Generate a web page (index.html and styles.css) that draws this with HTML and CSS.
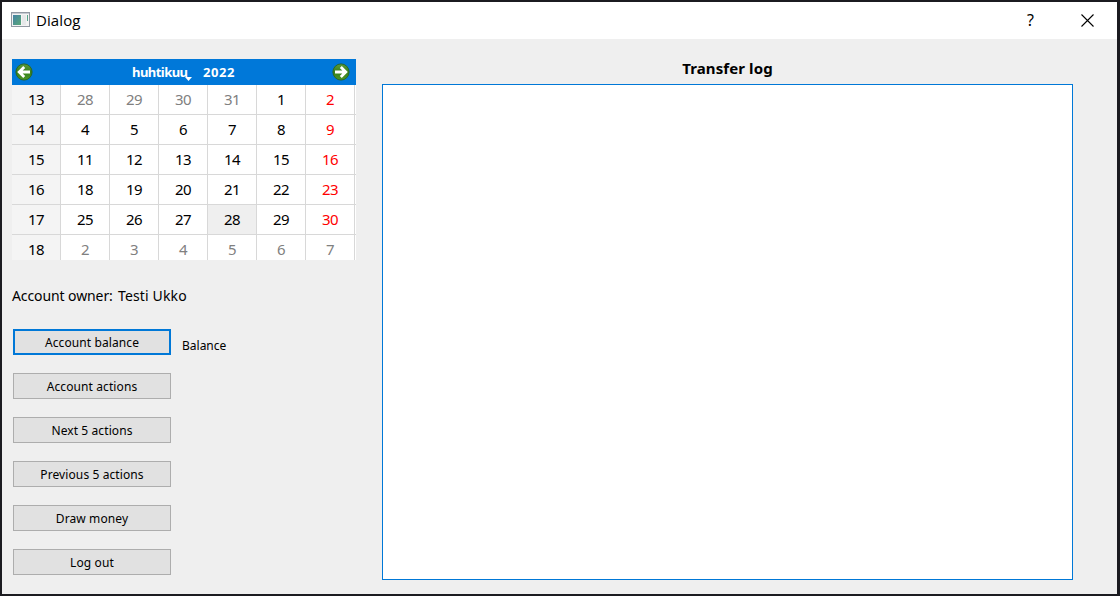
FILE: index.html
```
<!DOCTYPE html>
<html lang="en">
<head>
<meta charset="utf-8">
<title>Dialog</title>
<link rel="stylesheet" href="styles.css">
</head>
<body>
<div class="window">
  <header class="titlebar">
    <svg class="app-icon" width="19" height="16" viewBox="0 0 19 16">
      <defs><linearGradient id="pane" x1="0" y1="0" x2="1" y2="1"><stop offset="0" stop-color="#4482a5"/><stop offset="1" stop-color="#5aa878"/></linearGradient></defs>
      <rect x=".5" y=".5" width="18" height="14" fill="#f3f3f3" stroke="#9299a3"/>
      <path d="M1 1.5h17" stroke="#c6cad2"/>
      <rect x="2" y="3" width="8" height="10" fill="url(#pane)"/>
      <rect x="11" y="3" width="4" height="10" fill="#e6e8e9"/>
      <rect x="16" y="3" width="1" height="6" fill="#58a58b"/>
    </svg>
    <span class="title">Dialog</span>
    <span class="help">?</span>
    <svg class="close" width="13" height="13" viewBox="0 0 13 13"><path d="M.5.5l12 12M12.5.5l-12 12" fill="none" stroke="#000" stroke-width="1.1"/></svg>
  </header>
  <main class="content">
    <section class="left">
      <div class="calendar">
        <div class="nav">
          <svg class="prev" width="18" height="18" viewBox="0 0 18 18">
            <defs><linearGradient id="ball" x1="0" y1="0" x2="0" y2="1"><stop offset="0" stop-color="#5d9b3c"/><stop offset=".5" stop-color="#38801b"/><stop offset="1" stop-color="#4c9526"/></linearGradient></defs>
            <circle cx="9" cy="9" r="8.1" fill="url(#ball)" stroke="#2a6420" stroke-width=".9"/>
            <path d="M15 9H5M9.2 4L4.2 9l5 5" fill="none" stroke="#fff" stroke-width="2.8"/>
          </svg>
          <span class="month">huhtikuu<svg class="drop" width="7" height="4" viewBox="0 0 7 4"><path d="M0 0h7L3.5 4z" fill="#fff"/></svg></span>
          <span class="year">2022</span>
          <svg class="next" width="18" height="18" viewBox="0 0 18 18">
            <circle cx="9" cy="9" r="8.1" fill="url(#ball)" stroke="#2a6420" stroke-width=".9"/>
            <path d="M3 9h10M8.8 4l5 5-5 5" fill="none" stroke="#fff" stroke-width="2.8"/>
          </svg>
        </div>
        <div class="grid">
          <span class="week">13</span><span class="off">28</span><span class="off">29</span><span class="off">30</span><span class="off">31</span><span>1</span><span class="red">2</span><i></i>
          <span class="week">14</span><span>4</span><span>5</span><span>6</span><span>7</span><span>8</span><span class="red">9</span><i></i>
          <span class="week">15</span><span>11</span><span>12</span><span>13</span><span>14</span><span>15</span><span class="red">16</span><i></i>
          <span class="week">16</span><span>18</span><span>19</span><span>20</span><span>21</span><span>22</span><span class="red">23</span><i></i>
          <span class="week">17</span><span>25</span><span>26</span><span>27</span><span class="selected">28</span><span>29</span><span class="red">30</span><i></i>
          <span class="week">18</span><span class="off">2</span><span class="off">3</span><span class="off">4</span><span class="off">5</span><span class="off">6</span><span class="off">7</span><i></i>
        </div>
      </div>
      <div class="owner"><span class="owner-label">Account owner:</span><span class="owner-name">Testi Ukko</span></div>
      <div class="actions">
        <div class="action-row"><button class="btn focused">Account balance</button><span class="balance">Balance</span></div>
        <button class="btn">Account actions</button>
        <button class="btn">Next 5 actions</button>
        <button class="btn">Previous 5 actions</button>
        <button class="btn">Draw money</button>
        <button class="btn">Log out</button>
      </div>
    </section>
    <section class="log">
      <h1 class="log-title">Transfer log</h1>
      <div class="log-view"></div>
    </section>
  </main>
</div>
</body>
</html>
```
FILE: styles.css
```
* { box-sizing: border-box; }
body { margin: 0; font-family: "Noto Sans", sans-serif; color: #000; }
.window {
  width: 1120px; height: 596px;
  border: 2px solid #1b1b20; border-right-width: 3px;
  background: #efefef;
  display: flex; flex-direction: column; overflow: hidden;
}
.titlebar { height: 37px; flex: none; background: #fff; display: flex; align-items: center; padding: 0 23px 0 9px; }
.app-icon { margin-top: -1px; }
.title { margin: -2px 0 0 6px; font-family: "Open Sans", sans-serif; font-size: 15px; letter-spacing: .1px; flex: 1; }
.help { font-size: 16px; margin: -2px 47px 0 0; }
.close { display: block; }
.content { flex: 1; display: flex; padding: 20px 0 0 10px; }
.left { width: 344px; margin-right: 26px; }
.calendar { height: 201px; overflow: hidden; background: #fff; }
.nav { height: 26px; background: #0078d9; color: #fff; display: flex; align-items: center; padding: 0 6px 0 3px; font-weight: 700; font-size: 13px; }
.month { position: relative; margin-left: 99px; width: 71px; letter-spacing: -.55px; }
.drop { position: absolute; left: 53px; top: 14px; }
.year { flex: 1; letter-spacing: .6px; }
.grid { display: grid; grid-template-columns: repeat(7, 49px) 1px; grid-auto-rows: 30px; font-family: "Noto Sans", sans-serif; font-size: 15px; letter-spacing: -.6px; }
.grid span, .grid i { border-bottom: 1px solid #d8d8d8; }
.grid span { border-right: 1px solid #d8d8d8; text-align: center; line-height: 28px; }
.grid .week { background: #f4f4f4; }
.grid .off { color: #808080; }
.grid .red { color: #f00; }
.grid .selected { background: #efefef; }
.owner { height: 24px; margin-top: 24px; line-height: 24px; font-size: 14px; display: flex; white-space: nowrap; }
.owner-label { width: 106px; letter-spacing: -.1px; }
.owner-name { letter-spacing: .15px; }
.actions { margin: 21px 0 0 1px; display: flex; flex-direction: column; gap: 18px; }
.action-row { display: flex; gap: 11px; }
.btn {
  width: 158px; height: 26px; padding: 2px 0 0; border: 1px solid #adadad; background: #e1e1e1;
  font: 12px/22px "Noto Sans", sans-serif; color: #000; letter-spacing: .1px;
}
.btn.focused { border: 2px solid #0078d7; line-height: 20px; }
.balance { font-size: 12px; line-height: 34px; height: 26px; }
.log { width: 691px; }
.log-title { margin: 0; height: 25px; line-height: 19px; font-size: 15px; letter-spacing: .1px; text-align: center; }
.log-view { height: 496px; background: #fff; border: 1px solid #0078d7; }
```
